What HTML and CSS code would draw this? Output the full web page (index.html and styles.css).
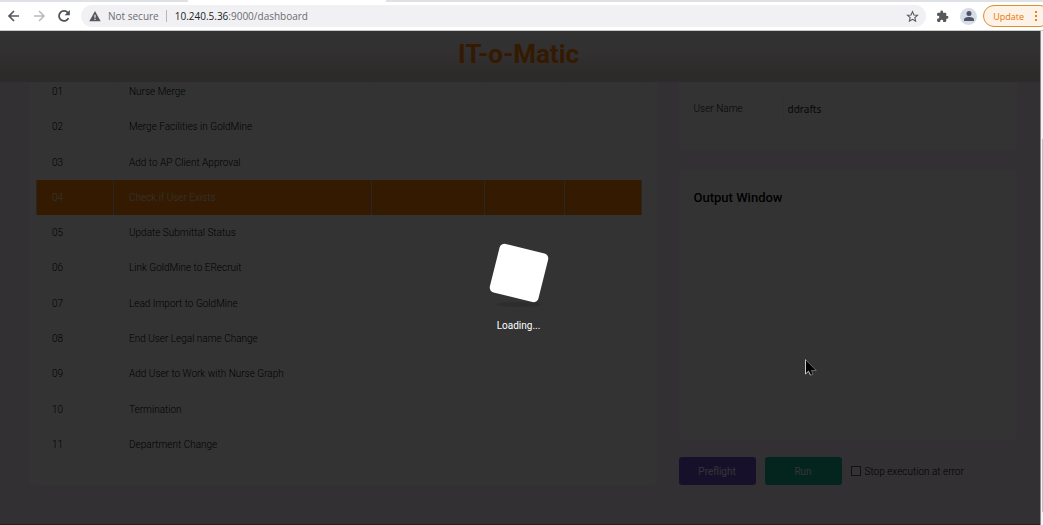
FILE: index.html
```html
<!DOCTYPE html>
<html lang="en">
<head>
<meta charset="utf-8">
<title>IT-o-Matic</title>
<link rel="stylesheet" href="styles.css">
</head>
<body>
<div class="tabs"><span class="tab-left"></span><span class="tab-active"></span><span class="tab-rest"></span></div>
<div class="toolbar">
  <button class="icon-btn" aria-label="Back"><svg viewBox="0 0 16 16" width="16" height="16"><path d="M13 8H3.500M8 3L3 8l5 5" fill="none" stroke="#55585c" stroke-width="1.700"/></svg></button>
  <button class="icon-btn" aria-label="Forward"><svg viewBox="0 0 16 16" width="16" height="16"><path d="M3 8h9.500M8 3l5 5-5 5" fill="none" stroke="#b9babc" stroke-width="1.500"/></svg></button>
  <button class="icon-btn" aria-label="Reload"><svg viewBox="0 0 16 16" width="16" height="16"><path d="M12.500 10.200A5 5 0 1 1 11.800 4.600" fill="none" stroke="#4e5155" stroke-width="1.800"/><path d="M13.800 2v5.200H8.600z" fill="#4e5155"/></svg></button>
  <div class="address">
    <svg viewBox="0 0 14 14" width="12" height="12"><path d="M7 1.200L13.600 13H.4z" fill="#55585c"/><path d="M7 5.400v3.600M7 10.200v1.500" stroke="#f1f1f4" stroke-width="1.400"/></svg>
    <span class="security">Not secure</span>
    <span class="url"><b>10.240.5.36</b>:9000/dashboard</span>
    <button class="star" aria-label="Bookmark this page"><svg viewBox="0 0 24 24" width="13" height="13"><path d="M12 3l2.700 6.100 6.600.6-5 4.400 1.500 6.500L12 17.200l-5.800 3.400 1.500-6.500-5-4.400 6.600-.6z" fill="none" stroke="#55585c" stroke-width="2"/></svg></button>
  </div>
  <button class="icon-btn ext" aria-label="Extensions"><svg viewBox="0 0 24 24" width="13" height="13"><path d="M20.500 11H19V7a2 2 0 0 0-2-2h-4V3.500a2.500 2.500 0 0 0-5 0V5H4a2 2 0 0 0-2 2v3.800h1.500a2.700 2.700 0 0 1 0 5.400H2V20a2 2 0 0 0 2 2h3.800v-1.500a2.700 2.700 0 0 1 5.400 0V22H17a2 2 0 0 0 2-2v-4h1.500a2.500 2.500 0 0 0 0-5z" fill="#55585c"/></svg></button>
  <button class="avatar" aria-label="Profile"><svg viewBox="0 0 12 12" width="12" height="12"><circle cx="6" cy="3.500" r="2.500" fill="#4d5566"/><path d="M1 11V9.500C1 7.700 4 7 6 7s5 .7 5 2.500V11z" fill="#4d5566"/></svg></button>
  <button class="update">Update <svg viewBox="0 0 4 12" width="4" height="12"><path d="M1 1h2v2H1zM1 5h2v2H1zM1 9h2v2H1z" fill="#ee8208"/></svg></button>
</div>
<div class="view">
  <div class="app">
    <header class="header"><h1>IT-o-Matic</h1></header>
    <main class="content">
      <section class="card list">
        <table>
          <colgroup><col class="c-num"><col class="c-name"><col class="c-a"><col class="c-b"><col class="c-c"></colgroup>
          <tbody>
            <tr><td>01</td><td>Nurse Merge</td><td></td><td></td><td></td></tr>
            <tr><td>02</td><td>Merge Facilities in GoldMine</td><td></td><td></td><td></td></tr>
            <tr><td>03</td><td>Add to AP Client Approval</td><td></td><td></td><td></td></tr>
            <tr class="selected"><td>04</td><td>Check if User Exists</td><td></td><td></td><td></td></tr>
            <tr><td>05</td><td>Update Submittal Status</td><td></td><td></td><td></td></tr>
            <tr><td>06</td><td>Link GoldMine to ERecruit</td><td></td><td></td><td></td></tr>
            <tr><td>07</td><td>Lead Import to GoldMine</td><td></td><td></td><td></td></tr>
            <tr><td>08</td><td>End User Legal name Change</td><td></td><td></td><td></td></tr>
            <tr><td>09</td><td>Add User to Work with Nurse Graph</td><td></td><td></td><td></td></tr>
            <tr><td>10</td><td>Termination</td><td></td><td></td><td></td></tr>
            <tr><td>11</td><td>Department Change</td><td></td><td></td><td></td></tr>
          </tbody>
        </table>
      </section>
      <div class="side">
        <section class="card user"><label for="user">User Name</label><input id="user" type="text" value="ddrafts"></section>
        <section class="card output"><h2>Output Window</h2></section>
        <div class="actions">
          <button class="btn preflight">Preflight</button>
          <button class="btn run">Run</button>
          <label class="stop"><input type="checkbox">Stop execution at error</label>
        </div>
      </div>
    </main>
    <div class="overlay"><div class="spinner"></div><div class="shadow"></div><p>Loading...</p></div>
    <svg class="pointer" viewBox="0 0 12 17" width="12" height="17"><path d="M.5.500v14.500l3-2.800 2 4 2.500-1-1.700-3.700h4.900z" fill="#000"/><path d="M.5.500v14.500l3-2.800 2 4" fill="none" stroke="#ddd" stroke-width=".9"/><path d="M.5.500l10.700 11H6.300l1.700 3.700-2.500 1" fill="none" stroke="#999" stroke-width=".6"/></svg>
  </div>
  <div class="scrollbar"><span class="thumb"></span></div>
</div>
</body>
</html>
```
FILE: styles.css
```css
* { box-sizing: border-box; }
body { margin: 0; height: 100vh; display: flex; flex-direction: column; overflow: hidden; font-family: Roboto, "Liberation Sans", sans-serif; font-size: 10px; background: #fff; }
button { font: inherit; border: 0; padding: 0; background: none; }
svg { display: block; }

.tabs { display: flex; height: 2px; flex: none; }
.tab-left { width: 18%; background: #dee1e6; }
.tab-active { width: 19%; }
.tab-rest { flex: 1; background: #dee1e6; }

.toolbar { display: flex; align-items: center; height: 29px; flex: none; padding-left: 6px; border-bottom: 1px solid #c9cbcb; background: #fff; overflow: hidden; }
.icon-btn { width: 16px; height: 16px; margin-right: 9px; flex: none; }
.address { flex: 1; display: flex; align-items: center; height: 22px; border-radius: 11px; background: #f1f1f4; padding: 0 7px 0 8px; font-family: "Open Sans", sans-serif; font-size: 10px; color: #6a6c70; }
.security { margin-left: 7px; padding-right: 7px; border-right: 1px solid #b5b6b9; line-height: 12px; }
.url { margin-left: 8px; flex: 1; }
.url b { font-weight: 400; color: #202124; }
.ext { width: 13px; height: 13px; margin: 0 11px 0 10px; }
.avatar { display: grid; place-items: center; width: 17px; height: 17px; border-radius: 50%; background: #d9dce5; }
.update { display: flex; align-items: center; gap: 10px; height: 22px; margin: 0 -8px 0 6px; padding: 0 12px 0 9px; border: 1px solid #d8912c; border-radius: 11px; background: #fdf2e7; color: #e67700; font-family: "Open Sans", sans-serif; font-size: 9px; font-weight: 500; }

.view { flex: 1; min-height: 0; display: flex; }
.app { position: relative; flex: 1; min-width: 0; overflow: hidden; background: #faf0fc; border-bottom: 1px solid #222; }
.header { position: relative; z-index: 1; height: 51px; display: flex; align-items: center; justify-content: center; padding: 0 3px 6px 0; background: linear-gradient(#ffffff, #f5e8ed 50%, #e1d0d0 85%, #d9cfd5); }
h1 { margin: 0; font-size: 26px; line-height: 30px; font-weight: 700; color: #ff8000; }
.content { display: grid; grid-template-columns: 65fr 35fr; align-items: start; gap: 21px; margin-top: -16px; padding: 0 23px 0 29px; }
.card { background: #fff; border-radius: 6px; }
.list { min-width: 0; padding: 8px 16px 23px 7px; }
table { width: 100%; height: 388px; table-layout: fixed; border-collapse: collapse; font-weight: 300; color: #000; }
td { padding: 0 16px 0 15px; border-left: 1px solid #f9f7fa; border-right: 1px solid #f9f7fa; }
.c-num { width: 77px; } .c-name { width: 258px; } .c-a { width: 113px; } .c-b { width: 80px; }
.selected td { background: #ff8000; color: #fff; border-color: #d9b8b0; }
.side { min-width: 0; }
.user { display: flex; align-items: center; height: 85px; padding: 0 15px; border-radius: 0 0 6px 6px; font-weight: 300; color: #201518; }
.user label { flex: 0 0 89px; }
.user input { flex: 1; min-width: 0; height: 20px; border: 0; border-left: 1px solid #f4eaf3; padding: 0 4px; font: 10px "Noto Sans", sans-serif; color: #222; background: none; }
.output { height: 271px; margin-top: 18px; padding: 21px 15px; }
h2 { margin: 0; font-size: 13px; line-height: 16px; font-weight: 500; color: #000; }
.actions { display: flex; align-items: center; gap: 9px; margin-top: 17px; }
.btn { width: 77px; height: 28px; border-radius: 3px; font-weight: 400; color: #fff; }
.preflight { background: #7350d7; }
.run { background: #14b396; }
.stop { display: flex; align-items: center; gap: 4px; font-weight: 300; color: #000; }
.stop input { appearance: none; width: 10px; height: 10px; margin: 0; border: 1px solid #555; background: #fff; }

.overlay { position: absolute; inset: 0; z-index: 2; display: flex; flex-direction: column; align-items: center; padding: 217px 3px 0 0; background: rgba(0, 0, 0, .8); color: #fff; }
.spinner { width: 50px; height: 50px; border-radius: 5px; background: #fff; transform: rotate(14deg); }
.shadow { width: 46px; height: 5px; margin-top: 4px; border-radius: 50%; background: rgba(0, 0, 0, .1); }
.overlay p { margin: 13px 0 0; line-height: 12px; font-weight: 400; }
.pointer { position: absolute; z-index: 3; left: 805px; top: 328px; }
.scrollbar { width: 3px; flex: none; display: flex; background: #f4f2f6; border-left: 1px solid #8a8a8c; padding: 108px 0 13px 1px; }
.thumb { flex: 1; background: #c1c1c4; }
```
